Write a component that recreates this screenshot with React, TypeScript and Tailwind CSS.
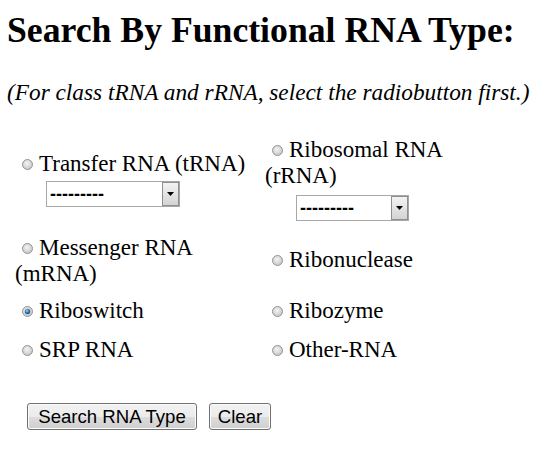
import React from "react";

function Radio({ checked = false }: { checked?: boolean }) {
  return (
    <svg
      width="11"
      height="11"
      viewBox="0 0 11 11"
      className="inline-block align-baseline ml-[7px] mr-[6px] mb-[1px]"
    >
      <defs>
        <radialGradient id={checked ? "rgc" : "rgu"} cx="0.45" cy="0.4" r="0.6">
          <stop offset="0" stopColor="#f4f4f4" />
          <stop offset="1" stopColor="#c6c6c6" />
        </radialGradient>
        <radialGradient id="dot" cx="0.4" cy="0.35" r="0.7">
          <stop offset="0" stopColor="#9fd3f5" />
          <stop offset="0.6" stopColor="#2d6fa8" />
          <stop offset="1" stopColor="#16466f" />
        </radialGradient>
      </defs>
      <circle cx="5.5" cy="5.5" r="5" fill={`url(#${checked ? "rgc" : "rgu"})`} stroke="#959595" strokeWidth="1" />
      {checked && <circle cx="5.5" cy="5.5" r="2.7" fill="url(#dot)" />}
    </svg>
  );
}

function FakeSelect({ width }: { width: number }) {
  return (
    <div
      className="relative h-[26px] border border-[#a7a7a7] bg-white flex items-center"
      style={{ width }}
    >
      <span
        className="pl-[3px] text-[18px] font-bold leading-none text-black"
        style={{ fontFamily: '"Liberation Sans", Arial, sans-serif' }}
      >
        ---------
      </span>
      <div className="absolute right-0 top-0 bottom-0 w-[17px] border border-[#8f8f8f] bg-gradient-to-b from-[#f3f3f3] to-[#d4d4d4] flex items-center justify-center">
        <svg width="7" height="4" viewBox="0 0 7 4">
          <path d="M0 0 H7 L3.5 4 Z" fill="#000" />
        </svg>
      </div>
    </div>
  );
}

function Button({ children, w }: { children: React.ReactNode; w: string }) {
  return (
    <div
      className={`${w} h-[27px] border border-[#707070] rounded-[3px] flex items-center justify-center text-[18.6px] text-black bg-[linear-gradient(to_bottom,#f2f2f2_0%,#ebebeb_50%,#dddddd_51%,#cfcfcf_100%)] shadow-[inset_0_0_0_1px_#fcfcfc] whitespace-nowrap`}
      style={{ fontFamily: '"Liberation Sans", Arial, sans-serif' }}
    >
      {children}
    </div>
  );
}

export default function App() {
  return (
    <div
      className="w-[546px] h-[449px] bg-white text-black overflow-hidden flex flex-col pt-[10px]"
      style={{ fontFamily: '"Liberation Serif", "Times New Roman", serif' }}
    >
      <h1 className="pl-[7px] text-[35.7px] leading-[40px] font-bold whitespace-nowrap">
        Search By Functional RNA Type:
      </h1>
      <p className="pl-[7px] mt-[29px] text-[23.3px] leading-[26px] italic whitespace-nowrap">
        (For class tRNA and rRNA, select the radiobutton first.)
      </p>

      <div className="mt-[25px] pl-[15px] flex flex-col text-[23px] leading-[26px]">
        <div className="h-[97px] grid grid-cols-[250px_200px] items-center">
          <div className="flex flex-col">
            <div>
              <Radio />Transfer RNA (tRNA)
            </div>
            <div className="ml-[31px] mt-[4px]">
              <FakeSelect width={134} />
            </div>
          </div>
          <div className="flex flex-col">
            <div>
              <Radio />Ribosomal RNA (rRNA)
            </div>
            <div className="ml-[31px] mt-[6px]">
              <FakeSelect width={113} />
            </div>
          </div>
        </div>

        <div className="h-[65px] grid grid-cols-[250px_200px] items-center">
          <div className="mt-[3px]">
            <Radio />Messenger RNA (mRNA)
          </div>
          <div>
            <Radio />Ribonuclease
          </div>
        </div>

        <div className="h-[38px] grid grid-cols-[250px_200px] items-center">
          <div>
            <Radio checked />Riboswitch
          </div>
          <div>
            <Radio />Ribozyme
          </div>
        </div>

        <div className="h-[40px] grid grid-cols-[250px_200px] items-center">
          <div>
            <Radio />SRP RNA
          </div>
          <div>
            <Radio />Other-RNA
          </div>
        </div>
      </div>

      <div className="mt-[33px] pl-[27px] flex gap-[12px]">
        <Button w="w-[170px]">Search RNA Type</Button>
        <Button w="w-[62px]">Clear</Button>
      </div>
    </div>
  );
}
